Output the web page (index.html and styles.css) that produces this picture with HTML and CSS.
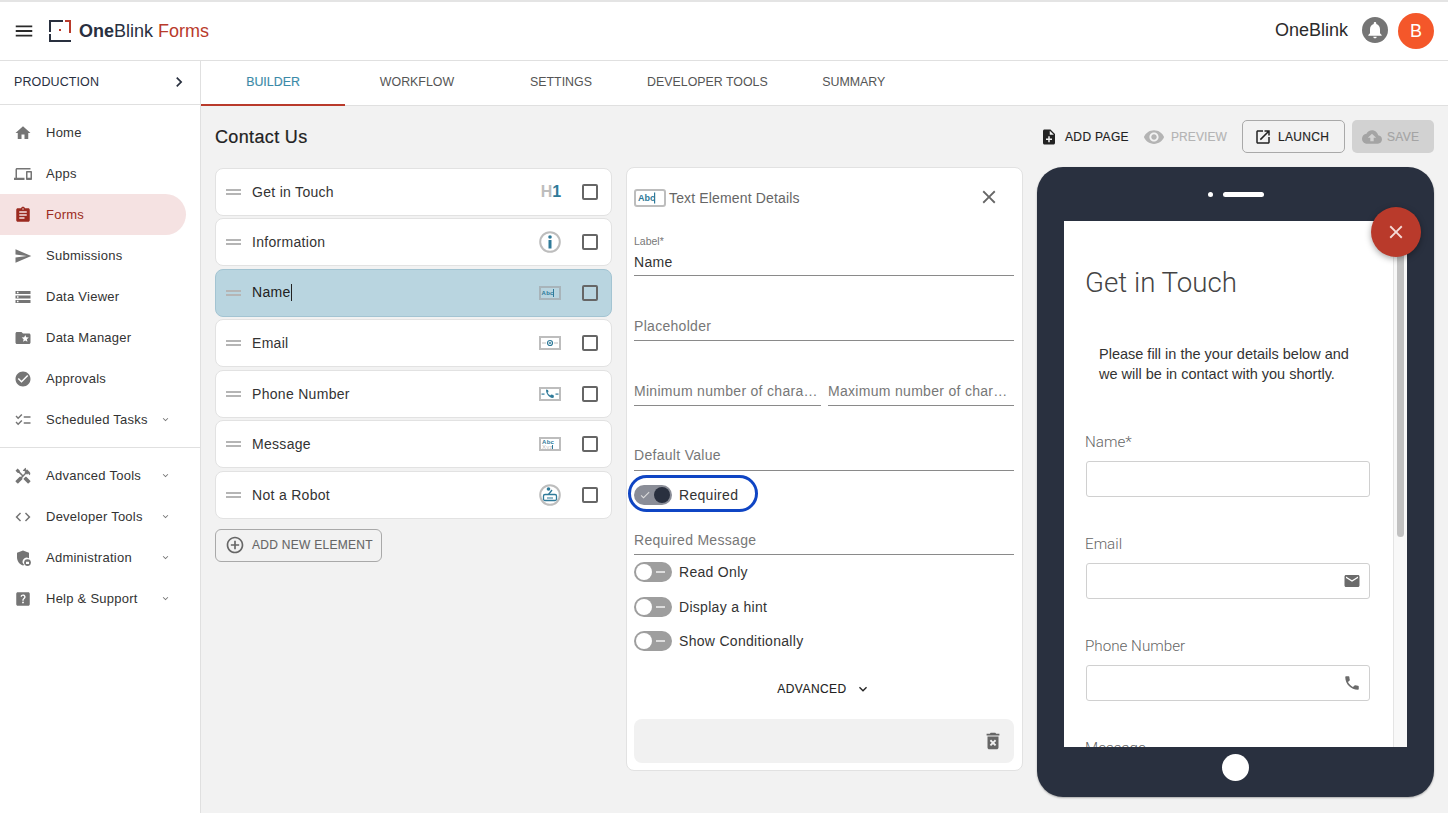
FILE: index.html
```html
<!DOCTYPE html>
<html lang="en">
<head>
<meta charset="utf-8">
<title>OneBlink Forms</title>
<link rel="stylesheet" href="styles.css">
</head>
<body>
<div class="app">
  <header class="topbar">
    <svg class="menu-icon" viewBox="0 0 24 24"><path d="M3 18h18v-2H3v2zm0-5h18v-2H3v2zm0-7v2h18V6H3z"/></svg>
    <svg class="logo" viewBox="0 0 22 22"><path class="logo-dark" d="M0 0h14v2H2v10H0zM0 14h2v6h20v2H0z"/><path class="logo-red" d="M16 0h6v13h-2V2h-4zM10 9h2v2h-2z"/></svg>
    <div class="brand"><b>One</b>Blink <span>Forms</span></div>
    <div class="topbar-right">
      <span class="org">OneBlink</span>
      <span class="bell"><svg viewBox="0 0 24 24"><path d="M12 22c1.100 0 2-.9 2-2h-4c0 1.100.89 2 2 2zm6-6v-5c0-3.070-1.640-5.640-4.500-6.320V4c0-.83-.67-1.500-1.500-1.500s-1.500.67-1.500 1.500v.68C7.630 5.360 6 7.920 6 11v5l-2 2v1h16v-1l-2-2z"/></svg></span>
      <span class="avatar">B</span>
    </div>
  </header>
  <div class="body">
    <aside class="sidebar">
      <div class="env"><span>PRODUCTION</span><svg viewBox="0 0 24 24"><path d="M8.590 16.590L13.170 12 8.590 7.410 10 6l6 6-6 6z"/></svg></div>
      <nav class="nav">
        <a class="nav-item"><svg viewBox="0 0 24 24"><path d="M10 20v-6h4v6h5v-8h3L12 3 2 12h3v8z"/></svg><span>Home</span></a>
        <a class="nav-item"><svg viewBox="0 0 24 24"><path d="M4 6h18V4H4c-1.100 0-2 .9-2 2v11H0v3h14v-3H4V6zm19 2h-6c-.55 0-1 .45-1 1v10c0 .55.45 1 1 1h6c.55 0 1-.45 1-1V9c0-.55-.45-1-1-1zm-1 9h-4v-7h4v7z"/></svg><span>Apps</span></a>
        <a class="nav-item active"><svg viewBox="0 0 24 24"><path d="M19 3h-4.180C14.400 1.840 13.300 1 12 1c-1.300 0-2.400.84-2.820 2H5c-1.100 0-2 .9-2 2v14c0 1.100.9 2 2 2h14c1.100 0 2-.9 2-2V5c0-1.100-.9-2-2-2zm-7 0c.55 0 1 .45 1 1s-.45 1-1 1-1-.45-1-1 .45-1 1-1zm2 14H7v-2h7v2zm3-4H7v-2h10v2zm0-4H7V7h10v2z"/></svg><span>Forms</span></a>
        <a class="nav-item"><svg viewBox="0 0 24 24"><path d="M2.010 21L23 12 2.010 3 2 10l15 2-15 2z"/></svg><span>Submissions</span></a>
        <a class="nav-item"><svg viewBox="0 0 24 24"><path d="M2 20h20v-4H2v4zm2-3h2v2H4v-2zM2 4v4h20V4H2zm4 3H4V5h2v2zm-4 7h20v-4H2v4zm2-3h2v2H4v-2z"/></svg><span>Data Viewer</span></a>
        <a class="nav-item"><svg viewBox="0 0 24 24"><path d="M20 6h-8l-2-2H4c-1.100 0-1.990.9-1.990 2L2 18c0 1.100.9 2 2 2h16c1.100 0 2-.9 2-2V8c0-1.100-.9-2-2-2zm-2.060 11L15 15.280 12.060 17l.78-3.330-2.590-2.240 3.410-.29L15 8l1.340 3.140 3.410.29-2.590 2.240.78 3.330z"/></svg><span>Data Manager</span></a>
        <a class="nav-item"><svg viewBox="0 0 24 24"><path d="M12 2C6.480 2 2 6.480 2 12s4.480 10 10 10 10-4.480 10-10S17.520 2 12 2zm-2 15l-5-5 1.410-1.410L10 14.170l7.590-7.590L19 8l-9 9z"/></svg><span>Approvals</span></a>
        <a class="nav-item"><svg viewBox="0 0 24 24"><path d="M22 7h-9v2h9V7zm0 8h-9v2h9v-2zM5.540 11L2 7.460l1.410-1.410 2.120 2.120 4.240-4.240 1.410 1.410L5.540 11zm0 8L2 15.460l1.410-1.410 2.120 2.120 4.240-4.240 1.410 1.410L5.540 19z"/></svg><span>Scheduled Tasks</span><svg class="caret" viewBox="0 0 24 24"><path d="M7.410 8.590L12 13.170l4.590-4.580L18 10l-6 6-6-6z"/></svg></a>
      </nav>
      <div class="nav-divider"></div>
      <nav class="nav">
        <a class="nav-item"><svg viewBox="0 0 24 24"><path d="M21.670 18.170l-5.300-5.300h-.99l-2.540 2.540v.99l5.300 5.300c.39.39 1.020.39 1.410 0l2.120-2.120c.39-.38.39-1.020 0-1.410z"/><path d="M17.340 10.190l1.410-1.410 2.120 2.120c1.170-1.170 1.170-3.070 0-4.240l-3.540-3.540-1.410 1.410V1.710l-.7-.71-3.540 3.540.71.71h2.830l-1.410 1.410 1.060 1.060-2.890 2.890-4.130-4.130V5.060L4.830 2.040 2 4.870 5.030 7.900h1.410l4.130 4.130-.85.85H7.600l-5.300 5.300c-.39.39-.39 1.020 0 1.410l2.120 2.120c.39.39 1.020.39 1.410 0l5.300-5.300v-2.120l5.150-5.150 1.060 1.050z"/></svg><span>Advanced Tools</span><svg class="caret" viewBox="0 0 24 24"><path d="M7.410 8.590L12 13.170l4.590-4.580L18 10l-6 6-6-6z"/></svg></a>
        <a class="nav-item"><svg viewBox="0 0 24 24"><path d="M9.400 16.600L4.800 12l4.600-4.600L8 6l-6 6 6 6 1.400-1.400zm5.200 0l4.600-4.600-4.600-4.600L16 6l6 6-6 6-1.400-1.400z"/></svg><span>Developer Tools</span><svg class="caret" viewBox="0 0 24 24"><path d="M7.410 8.590L12 13.170l4.590-4.580L18 10l-6 6-6-6z"/></svg></a>
        <a class="nav-item"><svg viewBox="0 0 24 24"><path d="M12 2L4 5v6c0 5 3.400 9.700 8 11 .6-.2 1.200-.4 1.700-.7A5.500 5.500 0 0 1 20 12.300V5z"/><circle cx="18" cy="18" r="4.500"/><rect class="cutout" x="16" y="17" width="4" height="3"/></svg><span>Administration</span><svg class="caret" viewBox="0 0 24 24"><path d="M7.410 8.590L12 13.170l4.590-4.580L18 10l-6 6-6-6z"/></svg></a>
        <a class="nav-item"><svg viewBox="0 0 24 24"><path d="M19 3H5c-1.100 0-2 .9-2 2v14c0 1.100.9 2 2 2h14c1.100 0 2-.9 2-2V5c0-1.100-.9-2-2-2zm-6.990 15c-.7 0-1.260-.56-1.260-1.260 0-.71.56-1.250 1.260-1.250.71 0 1.250.54 1.250 1.250-.01.69-.54 1.260-1.250 1.260zm3.010-7.400c-.76 1.110-1.480 1.460-1.870 2.170-.16.29-.22.48-.22 1.410h-1.820c0-.49-.08-1.290.31-1.980.49-.87 1.420-1.390 1.960-2.160.57-.81.25-2.330-1.370-2.330-1.060 0-1.580.8-1.800 1.480l-1.650-.7C9.010 7.150 10.220 6 11.990 6c1.480 0 2.490.67 3.010 1.520.44.72.7 2.070.03 3.080z"/></svg><span>Help &amp; Support</span><svg class="caret" viewBox="0 0 24 24"><path d="M7.410 8.590L12 13.170l4.590-4.580L18 10l-6 6-6-6z"/></svg></a>
      </nav>
    </aside>
    <div class="content">
      <div class="tabs">
        <a class="tab active">BUILDER</a>
        <a class="tab">WORKFLOW</a>
        <a class="tab">SETTINGS</a>
        <a class="tab">DEVELOPER TOOLS</a>
        <a class="tab">SUMMARY</a>
      </div>
      <main class="main">
        <div class="toolbar">
          <h1 class="title">Contact Us</h1>
          <div class="actions">
            <a class="action"><svg viewBox="0 0 24 24"><path d="M14 2H6c-1.100 0-1.990.9-1.990 2L4 20c0 1.100.89 2 1.990 2H18c1.100 0 2-.9 2-2V8l-6-6zm2 14h-3v3h-2v-3H8v-2h3v-3h2v3h3v2zm-3-7V3.500L18.500 9H13z"/></svg>ADD PAGE</a>
            <a class="action disabled"><svg class="eye" viewBox="0 0 24 24"><path d="M12 4.500C7 4.500 2.730 7.610 1 12c1.730 4.390 6 7.500 11 7.500s9.270-3.110 11-7.500c-1.730-4.390-6-7.500-11-7.500zM12 17c-2.760 0-5-2.240-5-5s2.240-5 5-5 5 2.240 5 5-2.240 5-5 5zm0-8c-1.660 0-3 1.340-3 3s1.340 3 3 3 3-1.340 3-3-1.340-3-3-3z"/></svg>PREVIEW</a>
            <a class="btn launch"><svg viewBox="0 0 24 24"><path d="M19 19H5V5h7V3H5c-1.110 0-2 .9-2 2v14c0 1.100.89 2 2 2h14c1.100 0 2-.9 2-2v-7h-2v7zM14 3v2h3.590l-9.830 9.830 1.410 1.410L19 6.410V10h2V3h-7z"/></svg>LAUNCH</a>
            <a class="btn save"><svg viewBox="0 0 24 24"><path d="M19.350 10.040C18.670 6.590 15.640 4 12 4 9.110 4 6.600 5.640 5.350 8.040 2.340 8.360 0 10.910 0 14c0 3.310 2.690 6 6 6h13c2.760 0 5-2.240 5-5 0-2.640-2.050-4.780-4.650-4.960zM14 13v4h-4v-4H7l5-5 5 5h-3z"/></svg>SAVE</a>
          </div>
        </div>
        <div class="columns">
          <section class="elements">
            <div class="card"><span class="drag"></span><span class="card-name">Get in Touch</span><span class="el-icon h1-icon"><span>H</span><b>1</b></span><span class="check"></span></div>
            <div class="card"><span class="drag"></span><span class="card-name">Information</span><span class="el-icon"><svg class="round-icon" viewBox="0 0 22 22"><circle cx="11" cy="11" r="9.800" class="stroke-grey"/><rect x="9.500" y="9" width="3" height="8.500" class="fill-blue"/><circle cx="11" cy="6" r="1.800" class="fill-blue"/></svg></span><span class="check"></span></div>
            <div class="card selected"><span class="drag"></span><span class="card-name">Name<i class="caret-bar"></i></span><span class="el-icon"><svg class="box-icon" viewBox="0 0 22 14"><rect x="1" y="1" width="20" height="12" class="stroke-grey"/><text x="2.500" y="9" class="abc">Abc</text><rect x="14" y="3" width="1" height="8" class="fill-blue"/></svg></span><span class="check"></span></div>
            <div class="card"><span class="drag"></span><span class="card-name">Email</span><span class="el-icon"><svg class="box-icon" viewBox="0 0 22 14"><rect x="1" y="1" width="20" height="12" class="stroke-grey"/><rect x="3" y="6.500" width="4" height="1" class="fill-grey"/><rect x="15" y="6.500" width="4" height="1" class="fill-grey"/><circle cx="11" cy="7" r="2.500" class="ring-blue"/><circle cx="11" cy="7" r="1" class="fill-blue"/></svg></span><span class="check"></span></div>
            <div class="card"><span class="drag"></span><span class="card-name">Phone Number</span><span class="el-icon"><svg class="box-icon" viewBox="0 0 22 14"><rect x="1" y="1" width="20" height="12" class="stroke-grey"/><rect x="2.500" y="6.500" width="3" height="1.200" class="fill-blue"/><rect x="16.500" y="6.500" width="3" height="1.200" class="fill-blue"/><path d="M7 2.500l2 .5.5 2-1 .8c.7 1.300 1.500 2 2.700 2.600l.9-1 2.400.6.500 2.200-1.500.8C10 10.500 7 7 7 2.500z" class="fill-blue"/></svg></span><span class="check"></span></div>
            <div class="card"><span class="drag"></span><span class="card-name">Message</span><span class="el-icon"><svg class="box-icon" viewBox="0 0 22 14"><rect x="1" y="1" width="20" height="12" class="stroke-grey"/><text x="3" y="6.500" class="abc">Abc</text><text x="3" y="11.500" class="abc grey">Xyz</text><rect x="13" y="8" width="1" height="4" class="fill-blue"/></svg></span><span class="check"></span></div>
            <div class="card"><span class="drag"></span><span class="card-name">Not a Robot</span><span class="el-icon"><svg class="round-icon" viewBox="0 0 22 22"><circle cx="11" cy="11" r="9.800" class="stroke-grey"/><rect x="4.500" y="10.500" width="13" height="6" rx="1.500" class="line-blue"/><path d="M9.500 10.500L13 6" class="line-blue"/><circle cx="9.500" cy="5" r="1.800" class="fill-blue"/><rect x="8" y="13.500" width="6" height="1" class="fill-blue"/></svg></span><span class="check"></span></div>
            <a class="add-element"><svg viewBox="0 0 24 24"><path d="M13 7h-2v4H7v2h4v4h2v-4h4v-2h-4V7zm-1-5C6.480 2 2 6.480 2 12s4.480 10 10 10 10-4.480 10-10S17.520 2 12 2zm0 18c-4.410 0-8-3.590-8-8s3.590-8 8-8 8 3.590 8 8-3.590 8-8 8z"/></svg>ADD NEW ELEMENT</a>
          </section>
          <section class="details">
            <div class="details-head">
              <svg class="details-icon" viewBox="0 0 32 18"><rect x="1" y="1" width="30" height="16" rx="2" class="stroke-grey"/><text x="4" y="12" class="abc big">Abc</text><rect x="20" y="3.500" width="1.200" height="11" class="fill-blue"/></svg>
              <span class="details-title">Text Element Details</span>
              <svg class="details-close" viewBox="0 0 24 24"><path d="M19 6.410L17.590 5 12 10.590 6.410 5 5 6.410 10.590 12 5 17.590 6.410 19 12 13.410 17.590 19 19 17.590 13.410 12z"/></svg>
            </div>
            <div class="field filled"><label class="field-mini">Label*</label><span class="field-value">Name</span></div>
            <div class="field"><span class="field-hint">Placeholder</span></div>
            <div class="field-row">
              <div class="field"><span class="field-hint">Minimum number of characters</span></div>
              <div class="field"><span class="field-hint">Maximum number of characters</span></div>
            </div>
            <div class="field raised"><span class="field-hint">Default Value</span></div>
            <div class="toggle-row required"><span class="toggle on"><svg viewBox="0 0 24 24"><path d="M9 16.170L4.830 12l-1.420 1.410L9 19 21 7l-1.410-1.410z"/></svg><i></i></span><span>Required</span></div>
            <div class="field short"><span class="field-hint">Required Message</span></div>
            <div class="toggle-row first"><span class="toggle"><i></i><em></em></span><span>Read Only</span></div>
            <div class="toggle-row middle"><span class="toggle"><i></i><em></em></span><span>Display a hint</span></div>
            <div class="toggle-row last"><span class="toggle"><i></i><em></em></span><span>Show Conditionally</span></div>
            <div class="advanced"><span>ADVANCED</span><svg viewBox="0 0 24 24"><path d="M7.410 8.590L12 13.170l4.590-4.580L18 10l-6 6-6-6z"/></svg></div>
            <div class="details-foot"><svg viewBox="0 0 24 24"><path d="M6 19c0 1.100.9 2 2 2h8c1.100 0 2-.9 2-2V7H6v12zm2.460-7.120l1.410-1.410L12 12.590l2.120-2.120 1.410 1.410L13.410 14l2.120 2.120-1.410 1.410L12 15.410l-2.120 2.120-1.410-1.410L10.590 14l-2.130-2.120zM15.500 4l-1-1h-5l-1 1H5v2h14V4z"/></svg></div>
          </section>
          <section class="device">
            <div class="device-top"><i class="cam"></i><i class="speaker"></i></div>
            <div class="screen">
              <div class="screen-body">
                <h2 class="form-title">Get in Touch</h2>
                <p class="form-info">Please fill in the your details below and we will be in contact with you shortly.</p>
                <div class="form-field"><div class="form-label">Name*</div><div class="form-input"></div></div>
                <div class="form-field"><div class="form-label">Email</div><div class="form-input"><svg viewBox="0 0 24 24"><path d="M20 4H4c-1.100 0-1.990.9-1.990 2L2 18c0 1.100.9 2 2 2h16c1.100 0 2-.9 2-2V6c0-1.100-.9-2-2-2zm0 4l-8 5-8-5V6l8 5 8-5v2z"/></svg></div></div>
                <div class="form-field"><div class="form-label">Phone Number</div><div class="form-input"><svg viewBox="0 0 24 24"><path d="M6.620 10.790c1.440 2.830 3.760 5.140 6.590 6.590l2.200-2.200c.27-.27.67-.36 1.020-.24 1.120.37 2.330.57 3.570.57.55 0 1 .45 1 1V20c0 .55-.45 1-1 1-9.390 0-17-7.610-17-17 0-.55.45-1 1-1h3.500c.55 0 1 .45 1 1 0 1.250.2 2.450.57 3.570.11.35.03.74-.25 1.020l-2.200 2.200z"/></svg></div></div>
                <div class="form-field"><div class="form-label">Message</div></div>
              </div>
              <div class="scrollbar"><i></i></div>
            </div>
            <div class="device-bottom"><i class="home-btn"></i></div>
            <button class="fab" type="button"><svg viewBox="0 0 24 24"><path d="M19 6.410L17.590 5 12 10.590 6.410 5 5 6.410 10.590 12 5 17.590 6.410 19 12 13.410 17.590 19 19 17.590 13.410 12z"/></svg></button>
          </section>
        </div>
      </main>
    </div>
  </div>
</div>
</body>
</html>
```
FILE: styles.css
```css
*, *::before, *::after { box-sizing: border-box; }
html, body { margin: 0; padding: 0; height: 813px; overflow: hidden; }
body { font-family: "Liberation Sans", Arial, sans-serif; color: #2b2b2b; background: #fff; font-size: 14px; }
.app { height: 813px; display: flex; flex-direction: column; border-top: 2px solid #e4e4e4; padding-top: 0; }
svg { fill: currentColor; display: block; flex: none; }

/* top bar */
.topbar { height: 59px; flex: none; display: flex; align-items: center; border-bottom: 1px solid #e0e0e0; padding: 0 14px 0 13px; }
.menu-icon { width: 22px; height: 22px; color: #2a2a2a; }
.logo { width: 22px; height: 22px; margin-left: 14px; }
.logo-dark { fill: #29303f; }
.logo-red { fill: #b93a2b; }
.brand { margin-left: 8px; font-size: 18px; color: #29303f; letter-spacing: 0; white-space: pre; }
.brand b { font-weight: 700; }
.brand span { color: #b93a2b; }
.topbar-right { margin-left: auto; display: flex; align-items: center; }
.org { font-size: 18px; color: #2b2b2b; margin-top: -2px; }
.bell { width: 26px; height: 26px; border-radius: 50%; background: #757575; color: #fff; margin: -2px 0 0 14px; display: flex; align-items: center; justify-content: center; }
.bell svg { width: 20px; height: 20px; }
.avatar { width: 36px; height: 36px; border-radius: 50%; background: #f4572a; color: #fff; font-size: 18px; margin-left: 10px; display: flex; align-items: center; justify-content: center; }

.body { flex: 1; display: flex; min-height: 0; }

/* sidebar */
.sidebar { width: 201px; flex: none; border-right: 1px solid #e0e0e0; background: #fff; }
.env { height: 44px; display: flex; align-items: center; justify-content: space-between; padding: 0 11px 2px 14px; border-bottom: 1px solid #e0e0e0; font-size: 12.500px; color: #29303f; letter-spacing: .1px; }
.env svg { width: 20px; height: 20px; }
.nav { display: block; padding-top: 7px; }
.nav-item { height: 41px; width: 186px; display: flex; align-items: center; padding-left: 14px; font-size: 13px; letter-spacing: .25px; color: #333; border-radius: 0 21px 21px 0; }
.nav-item svg { width: 18px; height: 18px; color: #757575; margin-right: 14px; }
.nav-item .caret { width: 11px; height: 11px; margin: 0 0 0 auto; position: relative; left: -15px; }
.nav-item.active { background: #f5e2e2; color: #9b2a20; }
.nav-item.active svg { color: #9b2a20; }
.nav-divider { height: 1px; background: #e0e0e0; margin-top: 7px; }
.cutout { fill: #fff; }

/* tabs */
.content { flex: 1; min-width: 0; display: flex; flex-direction: column; }
.tabs { height: 45px; flex: none; display: flex; border-bottom: 1px solid #e0e0e0; background: #fff; }
.tab { min-width: 144px; padding: 0 14px 3px; height: 45px; display: flex; align-items: center; justify-content: center; font-size: 12.400px; color: #555; }
.tab.active { color: #3b8aa8; border-bottom: 2px solid #b93a2b; padding-bottom: 1px; -webkit-text-stroke: .15px #3b8aa8; }

/* main */
.main { flex: 1; min-height: 0; background: #f2f2f2; padding: 0 14px; }
.toolbar { height: 61px; display: flex; align-items: center; justify-content: space-between; }
.title { font-size: 18px; font-weight: 400; margin: 2px 0 0; color: #222; letter-spacing: .35px; -webkit-text-stroke: .2px #222; }
.actions { display: flex; align-items: center; }
.action { display: flex; align-items: center; font-size: 12px; color: #222; letter-spacing: .35px; margin-right: 14px; -webkit-text-stroke: .15px currentColor; }
.action svg { width: 18px; height: 18px; margin-right: 7px; }
.action .eye { width: 22px; height: 22px; margin-right: 6px; }
.action.disabled { color: #b4b4b4; margin-right: 15px; letter-spacing: .1px; }
.btn { height: 33px; border-radius: 5px; display: flex; align-items: center; font-size: 12px; letter-spacing: .3px; -webkit-text-stroke: .15px currentColor; }
.launch { width: 103px; border: 1px solid #a9a9a9; padding-left: 11px; color: #222; }
.launch svg { width: 18px; height: 18px; margin-right: 6px; }
.save { width: 82px; margin-left: 7px; background: #d2d2d2; color: #a4a4a4; padding-left: 10px; }
.save svg { width: 20px; height: 20px; margin-right: 5px; }

.columns { display: grid; grid-template-columns: 397px 397px 397px; column-gap: 14px; align-items: start; }

/* elements */
.elements { display: flex; flex-direction: column; gap: 2.500px; padding-top: .5px; }
.card { height: 48px; display: flex; align-items: center; background: #fff; border: 1px solid #e2e2e2; border-radius: 8px; padding-left: 10px; letter-spacing: .3px; font-size: 14px; color: #333; }
.card.selected { background: #b9d5e0; border-color: #a3c4d2; color: #222; }
.drag { width: 15px; height: 6px; border-top: 2px solid #b5b5b5; border-bottom: 2px solid #b5b5b5; margin-right: 11px; flex: none; }
.card-name { flex: 1; }
.caret-bar { display: inline-block; width: 1px; height: 17px; background: #222; vertical-align: -4px; }
.el-icon { width: 22px; display: flex; align-items: center; justify-content: center; margin-right: 21px; }
.el-icon.h1-icon { margin-right: 20px; }
.h1-icon { font-size: 16px; font-weight: 700; letter-spacing: 0; color: #bdbdbd; }
.h1-icon b { color: #2f7a99; }
.round-icon { width: 22px; height: 22px; }
.box-icon { width: 22px; height: 14px; }
.stroke-grey { fill: #fff; stroke: #bdbdbd; stroke-width: 2; }
.selected .stroke-grey { fill: #b9d5e0; stroke: #a8b4ba; }
.fill-blue { fill: #2f7a99; }
.fill-grey { fill: #bdbdbd; }
.ring-blue { fill: none; stroke: #2f7a99; stroke-width: 1.200; }
.line-blue { fill: none; stroke: #2f7a99; stroke-width: 1.300; }
.abc { font-size: 6px; font-weight: 700; fill: #2f7a99; font-family: "Liberation Sans", sans-serif; }
.abc.grey { fill: #bdbdbd; font-weight: 400; }
.abc.big { font-size: 9px; }
.check { width: 16px; height: 16px; border: 2px solid #666; border-radius: 2px; margin-right: 13px; flex: none; }
.add-element { margin-top: 7.500px; width: 167px; height: 33px; border: 1px solid #a9a9a9; border-radius: 6px; display: flex; align-items: center; padding-left: 9px; font-size: 12px; color: #666; letter-spacing: .28px; -webkit-text-stroke: .1px #666; }
.add-element svg { width: 20px; height: 20px; margin-right: 7px; }

/* details */
.details { height: 604px; background: #fff; border: 1px solid #e2e2e2; border-radius: 8px; padding: 0 8px 0 7px; position: relative; }
.details-head { height: 59px; display: flex; align-items: center; }
.details-icon { width: 32px; height: 18px; }
.details-title { margin-left: 3px; font-size: 14px; color: #666; letter-spacing: .15px; }
.details-close { width: 22px; height: 22px; color: #666; margin-left: auto; margin-right: 14px; margin-top: -2px; }
.field { height: 65px; border-bottom: 1px solid #8a8a8a; display: flex; flex-direction: column; justify-content: flex-end; padding-bottom: 5px; min-width: 0; }
.field.filled { height: 49px; }
.field.raised { padding-bottom: 6px; }
.field-mini { font-size: 10.500px; color: #777; margin-bottom: 7px; }
.field-value { font-size: 14px; letter-spacing: .35px; color: #333; line-height: 16px; }
.field-hint { font-size: 14px; letter-spacing: .3px; color: #777; line-height: 18px; white-space: nowrap; overflow: hidden; text-overflow: ellipsis; }
.field-row { display: grid; grid-template-columns: 187px 186px; column-gap: 7px; }
.field.short { height: 42px; }
.toggle-row { height: 34.500px; display: flex; align-items: center; font-size: 14px; letter-spacing: .3px; color: #333; }
.toggle-row.required { height: 42px; padding-top: 6px; position: relative; }
.toggle-row.required::before { content: ""; position: absolute; left: -6px; top: 4px; width: 130px; height: 37px; border: 3.500px solid #0f45c4; border-radius: 19px; }
.toggle-row.first { height: 34px; }
.toggle-row.middle { height: 35px; }
.toggle-row.last { height: 34px; }
.toggle { width: 38px; height: 20px; border-radius: 10px; background: #9e9e9e; margin-right: 7px; position: relative; flex: none; }
.toggle i { position: absolute; left: 2px; top: 2px; width: 16px; height: 16px; border-radius: 50%; background: #fff; }
.toggle em { position: absolute; left: 22px; top: 9px; width: 9px; height: 2px; background: #ddd; }
.toggle.on { background: #8a8d97; }
.toggle.on i { left: 20px; background: #29303f; }
.toggle.on svg { position: absolute; left: 5px; top: 4px; width: 12px; height: 12px; color: #ddd; }
.advanced { display: flex; align-items: center; justify-content: center; height: 20px; margin-top: 21px; font-size: 12px; letter-spacing: .45px; color: #222; -webkit-text-stroke: .1px #222; }
.advanced svg { width: 16px; height: 16px; margin-left: 8px; }
.details-foot { margin-top: 20px; height: 44px; background: #f1f1f1; border-radius: 8px; display: flex; align-items: center; justify-content: flex-end; padding-right: 10px; color: #666; }
.details-foot svg { width: 22px; height: 22px; }

/* device */
.device { height: 630px; background: #29303f; border-radius: 26px; padding: 0 27px; position: relative; box-shadow: 0 1px 2px rgba(0,0,0,.3); }
.device-top { height: 54px; display: flex; align-items: center; justify-content: center; }
.cam { width: 5px; height: 5px; border-radius: 50%; background: #fff; margin-right: 10px; }
.speaker { width: 41px; height: 5px; border-radius: 3px; background: #fff; }
.screen { height: 526px; background: #fff; display: flex; overflow: hidden; }
.screen-body { flex: 1; min-width: 0; padding: 45px 23px 0 22px; overflow: hidden; }
.form-title { font-family: Roboto, sans-serif; font-weight: 300; font-size: 27.700px; line-height: 34px; margin: 0 0 0 -1px; color: #444; }
.form-info { margin: 44px 0 49px; padding-left: 13px; font-size: 14.500px; line-height: 20px; color: #333; }
.form-field { height: 102px; }
.form-label { font-family: Roboto, sans-serif; font-weight: 300; font-size: 15.200px; line-height: 19px; margin: 0 0 9px -1px; color: #666; }
.form-input { height: 36px; border: 1px solid #d0d0d0; border-radius: 3px; display: flex; align-items: center; justify-content: flex-end; padding-right: 8px; color: #6b6b6b; }
.form-input svg { width: 18px; height: 18px; }
.scrollbar { width: 14px; flex: none; background: #f8f8f8; border-left: 1px solid #e4e4e4; padding: 0 3px; }
.scrollbar i { display: block; height: 316px; background: #c1c1c1; border-radius: 4px; }
.device-bottom { height: 40px; display: flex; justify-content: center; align-items: center; }
.home-btn { width: 27px; height: 27px; border-radius: 50%; background: #fff; }
.fab { position: absolute; left: 334px; top: 40px; width: 50px; height: 50px; border-radius: 50%; border: 0; padding: 0; background: #b93a2b; color: #f5dcd8; display: flex; align-items: center; justify-content: center; box-shadow: 0 2px 6px rgba(0,0,0,.35); }
.fab svg { width: 22px; height: 22px; }
```
